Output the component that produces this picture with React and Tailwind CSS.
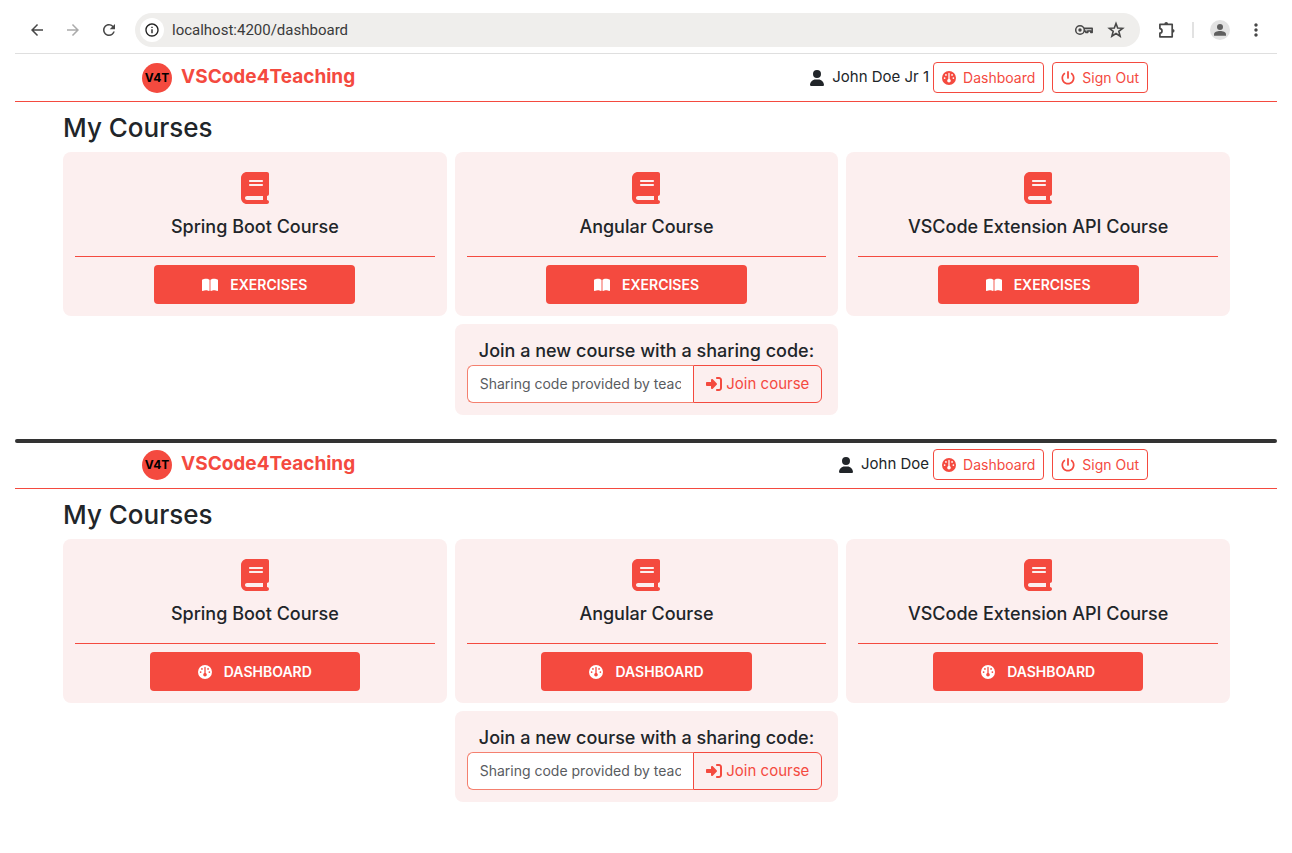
import {
  FaUser,
  FaGauge,
  FaPowerOff,
  FaBook,
  FaBookOpen,
  FaRightToBracket,
} from "react-icons/fa6";
import {
  MdArrowBack,
  MdArrowForward,
  MdRefresh,
  MdInfoOutline,
  MdMoreVert,
} from "react-icons/md";

const COURSES = ["Spring Boot Course", "Angular Course", "VSCode Extension API Course"];

function PuzzleIcon() {
  return (
    <svg viewBox="0 0 18 18" className="size-[18px]" fill="none" stroke="currentColor" strokeWidth="1.7">
      <path d="M1.9 3.4h12.3v12.4H1.9v-3.6c1.2-.1 2.1-1 2.1-2.3S3.100 7.700 1.900 7.600z" strokeLinejoin="round" />
      <path d="M6.300 3.200a1.900 2.200 0 0 1 3.800 0zM14.400 7.900a2.200 1.900 0 0 1 0 3.800z" fill="currentColor" stroke="none" />
    </svg>
  );
}

function KeyIcon() {
  return (
    <svg viewBox="0 0 20 20" className="size-5" fill="none" stroke="currentColor" strokeWidth="1.5">
      <path d="M9.300 8.300h8.900v4.300h-1.400v-1.500h-3v1.500h-2V11.200H9.400" fill="#bdbdbd" strokeLinejoin="round" />
      <circle cx="6" cy="10" r="4.300" fill="#efeeec" />
      <circle cx="6" cy="10" r="1.700" fill="currentColor" stroke="none" />
    </svg>
  );
}

function StarIcon() {
  return (
    <svg viewBox="0 0 20 20" className="size-5" fill="none" stroke="currentColor" strokeWidth="1.6">
      <path d="M10 3.500l1.700 4.500 4.900.3-3.800 3 1.300 4.800L10 13.500l-4.100 2.600 1.300-4.800-3.800-3 4.900-.3z" />
    </svg>
  );
}

function PersonIcon() {
  return (
    <svg viewBox="0 0 20 20" className="size-5" fill="currentColor">
      <circle cx="10" cy="6.900" r="3" />
      <path d="M4 15.800v-1.600c0-2 3.200-3.200 6-3.200s6 1.200 6 3.200v1.600z" />
    </svg>
  );
}

function BrowserBar() {
  return (
    <div className="flex h-11 items-center border-b border-[#dfdfdf] pb-[3px] pl-[13px] pr-[11px] text-[#474747]">
      <button aria-label="Back" className="mr-[18px]"><MdArrowBack className="size-[18px]" /></button>
      <button aria-label="Forward" className="mr-[18px] text-[#ababab]"><MdArrowForward className="size-[18px]" /></button>
      <button aria-label="Reload" className="mr-[17px]"><MdRefresh className="size-[18px]" /></button>
      <div className="flex h-[34px] flex-1 items-center rounded-full bg-[#efeeec] pl-[5px] pr-3.5">
        <button aria-label="Site information" className="flex size-6 items-center justify-center rounded-full bg-white text-[#1f1f1f]">
          <MdInfoOutline className="size-4" />
        </button>
        <input
          aria-label="Address"
          defaultValue="localhost:4200/dashboard"
          className="ml-2 min-w-0 flex-1 bg-transparent font-['Roboto',sans-serif] text-[15px] text-[#3a3a3a] outline-none"
        />
        <button aria-label="Passwords"><KeyIcon /></button>
        <button aria-label="Bookmark" className="ml-3"><StarIcon /></button>
      </div>
      <button aria-label="Extensions" className="ml-[18px]"><PuzzleIcon /></button>
      <span className="ml-4 h-4 w-0.5 bg-[#e2e2e2]" />
      <button aria-label="Profile" className="ml-4 flex size-5 items-center justify-center rounded-full bg-[#e3e3e3] text-[#5f5f5f]">
        <PersonIcon />
      </button>
      <button aria-label="Menu" className="ml-4"><MdMoreVert className="size-5" /></button>
    </div>
  );
}

function OutlineButton({ icon: Icon, children }) {
  return (
    <button className="flex h-[31px] items-center gap-[7px] rounded border border-[#f44a3f] px-2 text-sm text-[#f44a3f]">
      <Icon className="size-3.5" />
      {children}
    </button>
  );
}

function NavBar({ user }) {
  return (
    <nav className="flex h-12 items-center justify-between border-b border-[#f44a3f] pl-[127px] pr-[129px]">
      <a href="#home" className="flex items-center gap-[9px] text-[19px] font-bold text-[#f44a3f]">
        <span className="flex size-[30px] items-center justify-center rounded-full bg-[#f44a3f] text-xs font-bold text-black">
          V4T
        </span>
        VSCode4Teaching
      </a>
      <div className="flex items-center">
        <FaUser className="mr-2 h-4 w-3.5" />
        <span className="mr-1 text-[15px]">{user}</span>
        <OutlineButton icon={FaGauge}>Dashboard</OutlineButton>
        <span className="w-2" />
        <OutlineButton icon={FaPowerOff}>Sign Out</OutlineButton>
      </div>
    </nav>
  );
}

function CourseCard({ name, action, icon }) {
  return (
    <article className="flex flex-col items-center rounded-lg bg-[#fcefef] px-3 pb-3 pt-5">
      <FaBook className="h-8 w-7 text-[#f44a3f]" />
      <h2 className="mt-[11px] text-lg leading-6 font-medium">{name}</h2>
      <hr className="mt-[17px] w-full border-[#f44a3f]" />
      <button className="mt-2 flex h-[39px] items-center gap-3 rounded bg-[#f44a3f] px-12 text-sm font-semibold text-white">
        {icon}
        {action}
      </button>
    </article>
  );
}

function JoinCard({ id }) {
  return (
    <form className="col-start-2 rounded-lg bg-[#fcefef] px-3 pb-3 pt-[15px]">
      <label htmlFor={id} className="block text-center text-lg leading-6 font-medium">
        Join a new course with a sharing code:
      </label>
      <div className="mt-0.5 mr-1 flex h-[38px]">
        <input
          id={id}
          placeholder="Sharing code provided by teacher"
          className="min-w-0 flex-1 rounded-l-md border border-r-0 border-[#f4806f] bg-white px-3 text-sm placeholder:text-[#595c5f]"
        />
        <button type="button" className="flex items-center gap-1 rounded-r-md border border-[#f44a3f] px-3 text-[15px] text-[#f44a3f]">
          <FaRightToBracket className="size-4" />
          Join course
        </button>
      </div>
    </form>
  );
}

function Dashboard({ id, user, action, icon }) {
  return (
    <section>
      <NavBar user={user} />
      <main className="pl-12 pr-[47px] pt-2">
        <h1 className="text-[26px] leading-9 font-medium">My Courses</h1>
        <div className="mt-1.5 grid grid-cols-3 gap-2">
          {COURSES.map((name) => (
            <CourseCard key={name} name={name} action={action} icon={icon} />
          ))}
          <JoinCard id={id} />
        </div>
      </main>
    </section>
  );
}

export default function App() {
  return (
    <div className="min-h-screen bg-white px-[15px] pt-2.5 font-['Inter','Liberation_Sans',sans-serif] text-[#212529]">
      <BrowserBar />
      <Dashboard
        id="student-code"
        user="John Doe Jr 1"
        action="EXERCISES"
        icon={<FaBookOpen className="size-4" />}
      />
      <div className="mt-6 h-1 rounded-full bg-[#333333]" />
      <div className="-mt-0.5">
        <Dashboard
          id="teacher-code"
          user="John Doe"
          action="DASHBOARD"
          icon={<FaGauge className="size-3.5" />}
        />
      </div>
    </div>
  );
}
